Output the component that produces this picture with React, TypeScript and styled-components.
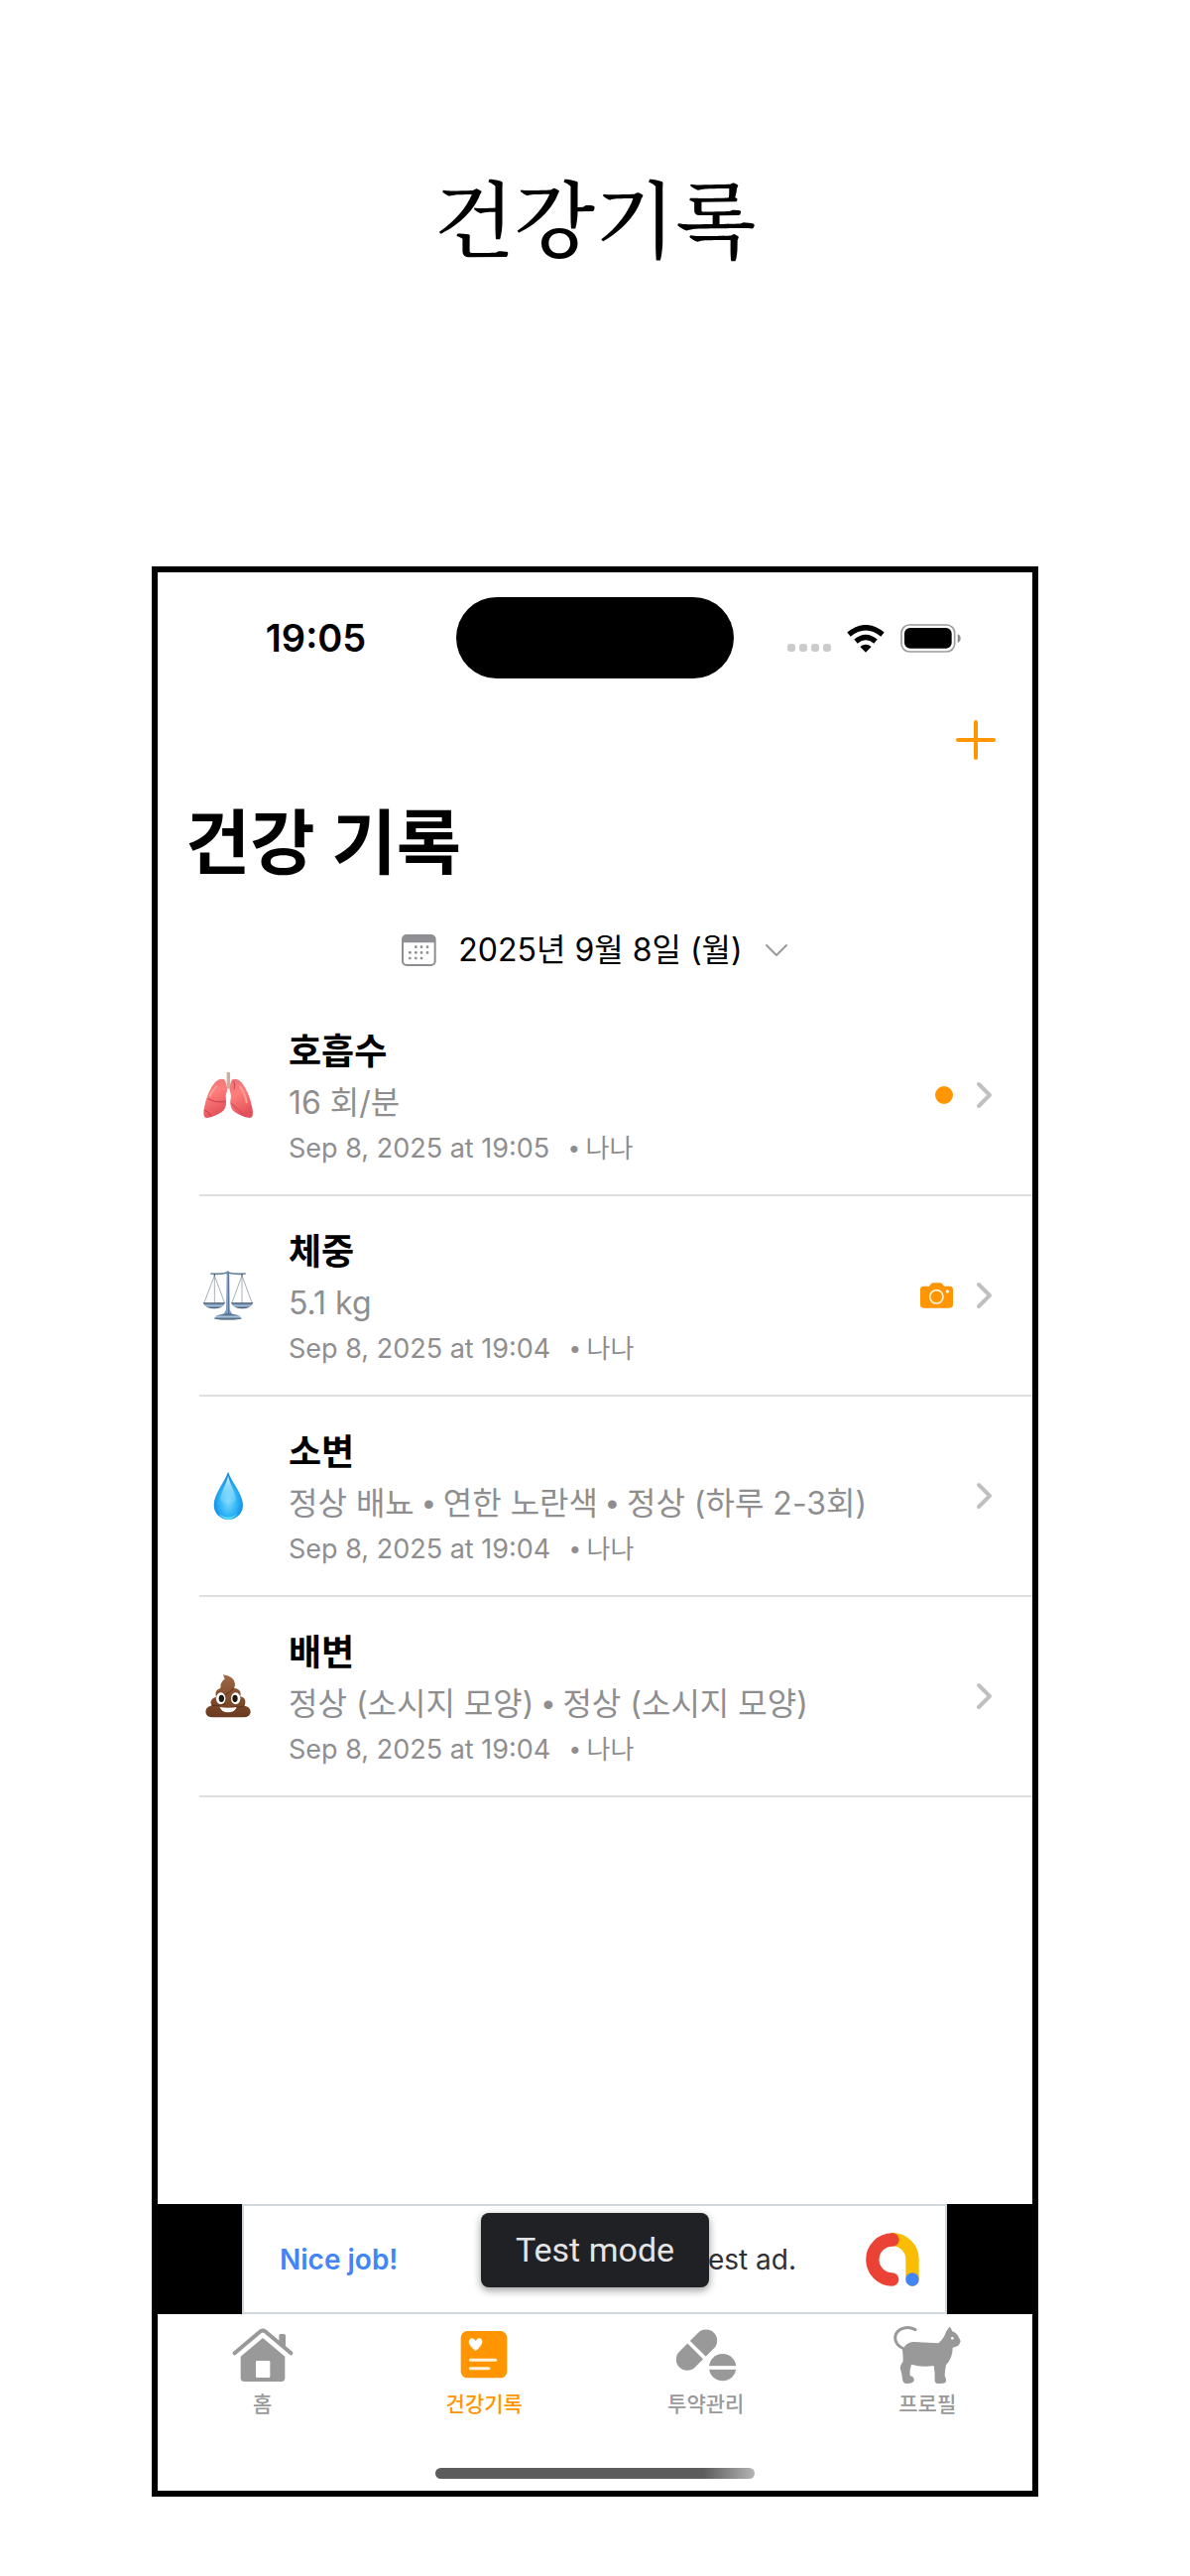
import React, { Fragment } from "react";
import styled, { createGlobalStyle } from "styled-components";

const SANS = `Inter, "Noto Sans CJK KR", sans-serif`;
const ORANGE = "#ff9500";

const GlobalStyle = createGlobalStyle`
  *, *::before, *::after { box-sizing: border-box; }
  body { margin: 0; background: #fff; color: #000; font-family: ${SANS}; }
  h1, h2, h3, p, ul { margin: 0; padding: 0; }
  ul { list-style: none; }
  button { border: 0; padding: 0; background: none; font: inherit; color: inherit; cursor: pointer; }
  svg { display: block; flex: none; }
`;

const Page = styled.div`
  display: flex;
  flex-direction: column;
  min-height: 100vh;
  padding: 0 153px 80px;
`;

const Headline = styled.h1`
  padding: 153px 0 290px;
  font-family: "Noto Serif CJK KR", "Noto Sans CJK KR", serif;
  font-size: 84px;
  line-height: 128px;
  font-weight: 500;
  text-align: center;
`;

const Screen = styled.main`
  flex: 1;
  display: flex;
  flex-direction: column;
  border: 6px solid #000;
`;

const StatusBar = styled.div`
  display: grid;
  grid-template-columns: 1fr 280px 1fr;
  align-items: center;
  padding-top: 25px;
`;

const Clock = styled.time`
  padding-left: 18px;
  font-size: 38px;
  line-height: 48px;
  font-weight: 600;
  text-align: center;
`;

const Island = styled.div`
  height: 82px;
  border-radius: 41px;
  background: #000;
`;

const StatusIcons = styled.div`
  display: flex;
  justify-content: center;
  align-items: flex-end;
  gap: 16px;
  padding-right: 18px;
`;

const Toolbar = styled.div`
  display: flex;
  justify-content: flex-end;
  padding: 32px 27px 0;
`;

const AddButton = styled.button`
  display: grid;
  place-items: center;
  width: 60px;
  height: 60px;
`;

const Title = styled.h2`
  padding: 21px 28px 0;
  font-size: 71px;
  line-height: 104px;
  font-weight: 700;
`;

const DateButton = styled.button`
  display: flex;
  align-items: center;
  align-self: center;
  gap: 22px;
  margin: 33px 0 22px;
  font-size: 32px;
  line-height: 48px;
`;

const List = styled.ul`
  flex: 1;
  padding-left: 42px;
`;

const Row = styled.li`
  display: flex;
  align-items: center;
  gap: 35px;
  height: 202px;
  padding: 0 40px 0 3px;
  border-bottom: 2px solid #dededf;
`;

const RowText = styled.div`
  flex: 1;
  min-width: 0;
  padding-top: 4px;
`;

const RowTitle = styled.h3`
  font-size: 36px;
  line-height: 52px;
  font-weight: 600;
`;

const RowValue = styled.p`
  color: #8e8e90;
  font-size: 32px;
  line-height: 52px;
`;

const RowMeta = styled.p`
  display: flex;
  gap: 20px;
  color: #8e8e90;
  font-size: 27px;
  line-height: 40px;
`;

const RowOwner = styled.span`
  font-size: 26px;
`;

const Bullet = styled.span`
  font-family: "Liberation Sans", sans-serif;
`;

const RowEnd = styled.div`
  display: flex;
  align-items: center;
  gap: 23px;
`;

const Dot = styled.span`
  width: 18px;
  height: 18px;
  border-radius: 50%;
  background: ${ORANGE};
`;

const AdStrip = styled.aside`
  position: relative;
  display: flex;
  justify-content: center;
  background: #000;
`;

const AdBanner = styled.div`
  flex: 1;
  display: flex;
  align-items: center;
  height: 111px;
  margin: 0 86px 0 85px;
  padding: 0 26px 0 36px;
  border: 2px solid #cfd8dc;
  background: #fff;
  font-size: 28px;
  line-height: 40px;
`;

const AdLead = styled.span`
  flex: 1;
  color: #4285f4;
  font-weight: 600;
`;

const AdText = styled.span`
  margin-right: 70px;
  color: #303134;
`;

const TestBadge = styled.div`
  position: absolute;
  top: 9px;
  left: 50%;
  width: 230px;
  margin-left: -115px;
  border-radius: 8px;
  background: #202124;
  box-shadow: 0 3px 8px rgba(0, 0, 0, 0.4);
  color: #e4e4e6;
  font-family: Roboto, sans-serif;
  font-size: 34px;
  line-height: 75px;
  text-align: center;
`;

const TabBar = styled.nav`
  display: grid;
  grid-template-columns: repeat(4, 1fr);
  margin: 0 -6px;
`;

const Tab = styled.button<{ $active?: boolean }>`
  display: flex;
  flex-direction: column;
  align-items: center;
  gap: 4px;
  padding-top: 11px;
  color: ${(p) => (p.$active ? ORANGE : "#999999")};
  font-size: 21px;
  line-height: 32px;
  font-weight: 500;
`;

const HomeIndicator = styled.div`
  align-self: center;
  width: 322px;
  height: 11px;
  margin: 48px 0 12px;
  border-radius: 6px;
  background: linear-gradient(90deg, #5c5c5c 0%, #5c5c5c 84%, #b4b4b4 100%);
`;

const Signal = () => (
  <svg width="44" height="9" viewBox="0 0 44 9" fill="#cbcbcb">
    {[0, 12, 24, 36].map((x) => (
      <rect key={x} x={x} y="0" width="8" height="8" rx="3" />
    ))}
  </svg>
);

const Wifi = () => (
  <svg width="38" height="28" viewBox="0 0 114 84">
    <g fill="none" stroke="#000" strokeWidth="16">
      <path d="M6 29 Q57 -13 108 29" />
      <path d="M27 50 Q57 25 87 50" />
    </g>
    <path d="M57 83 L40 66 Q57 53 74 66 Z" />
  </svg>
);

const Battery = () => (
  <svg width="61" height="29" viewBox="0 0 183 87">
    <rect x="3" y="3" width="161" height="81" rx="24" fill="none" stroke="#9c9c9c" strokeWidth="5" />
    <rect x="12" y="12" width="143" height="62" rx="17" />
    <path d="M173 31 q9 3 9 13 q0 9 -9 13z" fill="#8c8c8c" />
  </svg>
);

const PlusIcon = () => (
  <svg width="40" height="40" viewBox="0 0 40 40" stroke={ORANGE} strokeWidth="4" strokeLinecap="round">
    <path d="M20 2V38M2 20H38" />
  </svg>
);

const CalendarIcon = () => {
  const dots = [
    [43, 38], [60, 38], [78, 38],
    [25, 55], [43, 55], [60, 55], [78, 55],
    [25, 72], [43, 72], [60, 72],
  ];
  return (
    <svg width="35" height="32" viewBox="0 0 105 96" fill="#8e8e93">
      <rect x="3" y="3" width="98" height="90" rx="12" fill="none" stroke="#8e8e93" strokeWidth="6" />
      <path d="M2 25V14Q2 2 14 2H90Q102 2 102 14V25Z" />
      {dots.map(([x, y]) => (
        <rect key={`${x}-${y}`} x={x - 4} y={y - 4} width="8" height="8" rx="3" />
      ))}
    </svg>
  );
};

const ChevronDown = () => (
  <svg width="24" height="14" viewBox="0 0 24 14" fill="none" stroke="#9a9a9e" strokeWidth="2" strokeLinecap="round" strokeLinejoin="round">
    <path d="M2 2L12 12L22 2" />
  </svg>
);

const ChevronRight = () => (
  <svg width="17" height="28" viewBox="0 0 17 28" fill="none" stroke="#c0c0c1" strokeWidth="4" strokeLinecap="round" strokeLinejoin="round">
    <path d="M3 3L14 14L3 25" />
  </svg>
);

const CameraIcon = () => (
  <svg width="33" height="26" viewBox="228 821 99 78">
    <path
      fill={ORANGE}
      d="M238 832H255Q261 822 267 822H288Q294 822 300 832H317Q327 832 327 842V888Q327 898 317 898H238Q228 898 228 888V842Q228 832 238 832Z"
    />
    <circle cx="277" cy="864" r="20" fill="none" stroke="#fff3dd" strokeWidth="5" />
    <circle cx="310" cy="848" r="5" fill="#fff3dd" />
  </svg>
);

const Lungs = () => (
  <svg width="52" height="52" viewBox="162 176 156 156">
    <defs>
      <linearGradient id="lung" x1="0" y1="0" x2="0.3" y2="1">
        <stop offset="0" stopColor="#e8747a" />
        <stop offset="0.45" stopColor="#ff7d7a" />
        <stop offset="1" stopColor="#e2525c" />
      </linearGradient>
    </defs>
    <path d="M236 186Q240 182 246 186V226L258 238L254 243L241 234L229 243L225 238L236 226Z" fill="#cfae9f" />
    <path d="M228 207Q215 201 201 215Q176 243 167 297Q163 324 176 323Q201 319 222 304Q236 295 234 270Q231 257 237 240Q235 212 228 207Z" fill="url(#lung)" />
    <path d="M253 207Q266 201 280 215Q304 243 314 297Q318 324 305 323Q280 319 259 304Q245 295 247 270Q251 257 245 240Q246 212 253 207Z" fill="url(#lung)" />
    <path d="M179 264Q198 278 231 274M169 300Q180 302 188 318" fill="none" stroke="#c23e4a" strokeWidth="3" />
    <path d="M248 278Q272 296 292 320M258 236Q262 224 258 212" fill="none" stroke="#cd4652" strokeWidth="3" />
    <path d="M205 228Q190 243 186 256M276 228Q292 250 296 276" fill="none" stroke="#ff9d98" strokeWidth="6" strokeLinecap="round" />
  </svg>
);

const Scales = () => (
  <svg width="52" height="52" viewBox="163 784 156 156">
    <defs>
      <linearGradient id="steel" x1="0" y1="0" x2="0" y2="1">
        <stop offset="0" stopColor="#38506b" />
        <stop offset="0.5" stopColor="#a9c4df" />
        <stop offset="1" stopColor="#32465c" />
      </linearGradient>
    </defs>
    <g fill="none" stroke="#7b8794" strokeWidth="2">
      <path d="M200 802L168 886M200 802L231 886M200 802V886M283 802L252 886M283 802L314 886M283 802V886" />
    </g>
    <path d="M190 796Q215 799 240 793Q265 799 292 796" fill="none" stroke="#62809c" strokeWidth="5" strokeLinecap="round" />
    <path d="M200 796V803M283 796V803" stroke="#43597a" strokeWidth="4" />
    <path d="M237 794H244L246 905L254 920H227L235 905Z" fill="#7fa0c3" />
    <path d="M243 796V918" stroke="#3c5878" strokeWidth="2" />
    <circle cx="240" cy="793" r="5" fill="#718ba8" />
    <path d="M165 884H232Q226 902 199 902Q171 902 165 884Z" fill="url(#steel)" />
    <path d="M250 884H317Q311 902 284 902Q256 902 250 884Z" fill="url(#steel)" />
    <path d="M212 921Q240 914 269 921Q283 925 281 933Q240 938 200 933Q198 925 212 921Z" fill="url(#steel)" />
  </svg>
);

const Droplet = () => (
  <svg width="52" height="52" viewBox="162 189 156 156">
    <defs>
      <radialGradient id="water" cx="0.5" cy="0.62" r="0.55">
        <stop offset="0" stopColor="#7fd9fb" />
        <stop offset="0.55" stopColor="#2fb4f6" />
        <stop offset="1" stopColor="#0a86e2" />
      </radialGradient>
      <linearGradient id="gloss" x1="0" y1="0" x2="0" y2="1">
        <stop offset="0" stopColor="#dcf7ff" />
        <stop offset="1" stopColor="#8adcfc" stopOpacity="0.2" />
      </linearGradient>
    </defs>
    <path d="M240 194C247 222 285 258 285 296A44 43 0 0 1 197 296C197 258 233 222 240 194Z" fill="url(#water)" />
    <path d="M240 206C245 230 264 262 264 280Q240 306 216 280C216 262 236 230 240 206Z" fill="url(#gloss)" />
    <path d="M212 322Q240 342 268 322Q254 338 240 338Q226 338 212 322Z" fill="#5fe0fb" />
  </svg>
);

const Poop = () => (
  <svg width="52" height="52" viewBox="163 797 156 156">
    <defs>
      <linearGradient id="brown" x1="0" y1="0" x2="0" y2="1">
        <stop offset="0" stopColor="#9c6848" />
        <stop offset="0.5" stopColor="#85502f" />
        <stop offset="1" stopColor="#693a20" />
      </linearGradient>
    </defs>
    <path
      fill="url(#brown)"
      d="M226 810Q260 815 262 838Q262 846 259 850Q279 853 279 868Q279 873 277 876Q295 879 293 895Q293 900 290 904Q309 906 309 924Q307 939 288 939H195Q174 939 173 922Q174 907 192 903Q186 898 190 888Q194 879 205 877Q200 862 210 855Q222 851 218 842Q222 828 231 824Q228 816 226 810Z"
    />
    <path d="M206 877Q232 878 258 851M192 903Q215 906 232 898M250 908Q280 910 290 904" fill="none" stroke="#57301a" strokeWidth="3" />
    <ellipse cx="219" cy="882" rx="14" ry="18" fill="#fff" />
    <ellipse cx="264" cy="882" rx="14" ry="18" fill="#fff" />
    <ellipse cx="221" cy="882" rx="8" ry="11" fill="#1e1612" />
    <ellipse cx="262" cy="882" rx="8" ry="11" fill="#1e1612" />
    <path d="M216 908Q241 913 267 908Q262 924 241 924Q221 924 216 908Z" fill="#fff" />
  </svg>
);

const AdLogo = () => (
  <svg width="54" height="54" viewBox="820 150 162 162" fill="none" strokeWidth="40" strokeLinecap="round">
    <path d="M901 170A60 60 0 0 1 961 230V291" stroke="#fbbc04" />
    <path d="M901 171A60 60 0 0 0 900 291" stroke="#ea4335" />
    <circle cx="961" cy="291" r="20" fill="#4285f4" />
  </svg>
);

const HomeIcon = () => (
  <svg width="68" height="60" viewBox="271 432 204 180" fill="currentColor">
    <path d="M288 517L366 451Q373 446 380 451L458 517" fill="none" stroke="currentColor" strokeWidth="12" strokeLinecap="round" />
    <path d="M422 464Q422 459 427 459H437Q442 459 442 464V503L422 486Z" />
    <path d="M373 471L440 527V592Q440 603 429 603H317Q306 603 306 592V527Z" />
    <rect x="352" y="540" width="43" height="51" rx="4" fill="#fff" />
  </svg>
);

const RecordIcon = () => (
  <svg width="68" height="60" viewBox="943 432 204 180" fill="currentColor">
    <rect x="975" y="450" width="140" height="142" rx="20" />
    <path d="M1020 510Q1000 496 999 484Q1000 473 1009 472Q1016 472 1020 480Q1024 472 1031 472Q1040 473 1040 484Q1039 496 1020 510Z" fill="#fff" />
    <path d="M1004 538H1080M1004 563H1060" stroke="#fff3dd" strokeWidth="9" strokeLinecap="round" />
  </svg>
);

const PillsIcon = () => (
  <svg width="68" height="60" viewBox="232 432 204 180" stroke="currentColor" fill="currentColor">
    <path d="M334 479L277 536" strokeWidth="67" strokeLinecap="round" />
    <path d="M278 480L334 536" stroke="#fff" strokeWidth="11" />
    <circle cx="384" cy="560" r="41" stroke="none" />
    <path d="M340 561H428" stroke="#fff" strokeWidth="11" />
  </svg>
);

const CatIcon = () => (
  <svg width="68" height="60" viewBox="905 432 204 180" fill="currentColor">
    <path d="M971 446C948 434 923 440 913 458C905 478 915 496 940 505" fill="none" stroke="currentColor" strokeWidth="9" strokeLinecap="round" />
    <path d="M932 506Q944 484 966 483L1041 487Q1058 472 1064 452L1073 439Q1076 436 1078 441L1083 451Q1097 456 1103 470L1108 480Q1105 496 1092 498L1084 500Q1084 532 1064 552Q1060 572 1060 586Q1067 598 1062 606Q1056 610 1037 609Q1030 607 1030 600Q1031 575 1027 555Q990 561 959 551Q953 570 955 585Q969 588 967 600Q964 610 942 609Q935 608 933 600Q931 580 925 562Q927 550 934 542Q934 520 932 506Z" />
    <circle cx="1083" cy="472" r="4" fill="#fff" />
  </svg>
);

const records = [
  { icon: <Lungs />, title: "호흡수", values: ["16 회/분"], time: "Sep 8, 2025 at 19:05", mark: <Dot /> },
  { icon: <Scales />, title: "체중", values: ["5.1 kg"], time: "Sep 8, 2025 at 19:04", mark: <CameraIcon /> },
  { icon: <Droplet />, title: "소변", values: ["정상 배뇨", "연한 노란색", "정상 (하루 2-3회)"], time: "Sep 8, 2025 at 19:04" },
  { icon: <Poop />, title: "배변", values: ["정상 (소시지 모양)", "정상 (소시지 모양)"], time: "Sep 8, 2025 at 19:04" },
];

const tabs = [
  { icon: <HomeIcon />, label: "홈" },
  { icon: <RecordIcon />, label: "건강기록", active: true },
  { icon: <PillsIcon />, label: "투약관리" },
  { icon: <CatIcon />, label: "프로필" },
];

export default function App() {
  return (
    <>
      <GlobalStyle />
      <Page>
        <Headline>건강기록</Headline>
        <Screen>
          <StatusBar>
            <Clock>19:05</Clock>
            <Island />
            <StatusIcons>
              <Signal />
              <Wifi />
              <Battery />
            </StatusIcons>
          </StatusBar>
          <Toolbar>
            <AddButton>
              <PlusIcon />
            </AddButton>
          </Toolbar>
          <Title>건강 기록</Title>
          <DateButton>
            <CalendarIcon />
            <span>2025년 9월 8일 (월)</span>
            <ChevronDown />
          </DateButton>
          <List>
            {records.map((r) => (
              <Row key={r.title}>
                {r.icon}
                <RowText>
                  <RowTitle>{r.title}</RowTitle>
                  <RowValue>
                    {r.values.map((value, i) => (
                      <Fragment key={i}>
                        {i > 0 && <Bullet> • </Bullet>}
                        {value}
                      </Fragment>
                    ))}
                  </RowValue>
                  <RowMeta>
                    <span>{r.time}</span>
                    <RowOwner>
                      <Bullet>• </Bullet>
                      나나
                    </RowOwner>
                  </RowMeta>
                </RowText>
                <RowEnd>
                  {r.mark}
                  <ChevronRight />
                </RowEnd>
              </Row>
            ))}
          </List>
          <AdStrip>
            <AdBanner>
              <AdLead>Nice job!</AdLead>
              <AdText>test ad.</AdText>
              <AdLogo />
            </AdBanner>
            <TestBadge>Test mode</TestBadge>
          </AdStrip>
          <TabBar>
            {tabs.map((t) => (
              <Tab key={t.label} $active={t.active}>
                {t.icon}
                {t.label}
              </Tab>
            ))}
          </TabBar>
          <HomeIndicator />
        </Screen>
      </Page>
    </>
  );
}
